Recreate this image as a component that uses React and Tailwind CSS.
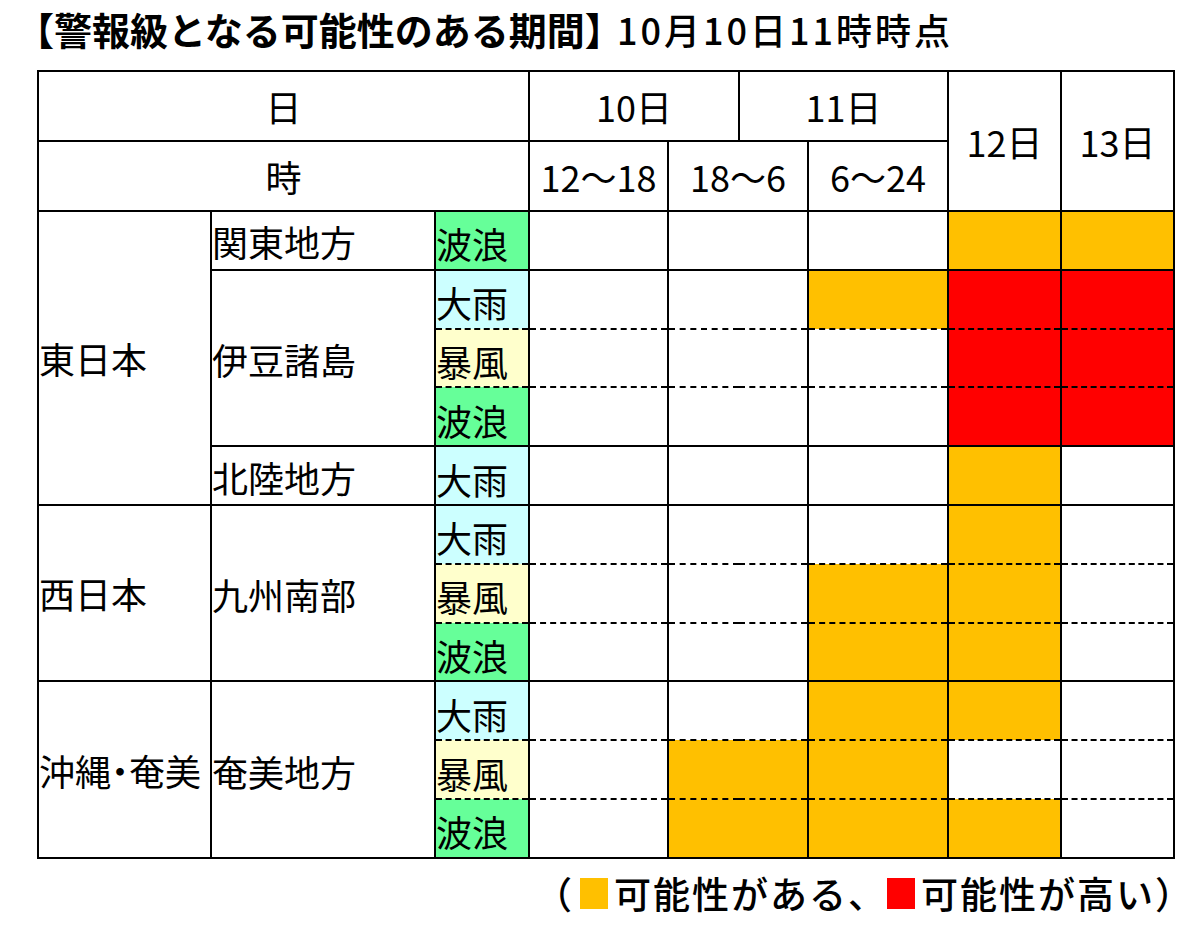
import React from 'react';

const W = 'w', O = 'o', R = 'r';

const fill = {
  w: 'bg-white',
  o: 'bg-[#ffc000]',
  r: 'bg-[#ff0000]',
};

const typeBg = {
  大雨: 'bg-[#ccffff]',
  暴風: 'bg-[#ffffcc]',
  波浪: 'bg-[#66ff99]',
};

// region -> areas -> rows of [type, cells(12-18, 18-6, 6-24, 12日, 13日)]
const data = [
  {
    region: '東日本',
    span: 5,
    areas: [
      { name: '関東地方', rows: [['波浪', [W, W, W, O, O]]] },
      {
        name: '伊豆諸島',
        rows: [
          ['大雨', [W, W, O, R, R]],
          ['暴風', [W, W, W, R, R]],
          ['波浪', [W, W, W, R, R]],
        ],
      },
      { name: '北陸地方', rows: [['大雨', [W, W, W, O, W]]] },
    ],
  },
  {
    region: '西日本',
    span: 3,
    areas: [
      {
        name: '九州南部',
        rows: [
          ['大雨', [W, W, W, O, W]],
          ['暴風', [W, W, O, O, W]],
          ['波浪', [W, W, O, O, W]],
        ],
      },
    ],
  },
  {
    region: <>沖縄<span className="[font-feature-settings:'halt']">・</span>奄美</>,
    span: 3,
    areas: [
      {
        name: '奄美地方',
        rows: [
          ['大雨', [W, W, O, O, W]],
          ['暴風', [W, O, O, W, W]],
          ['波浪', [W, O, O, O, W]],
        ],
      },
    ],
  },
];

const cell = 'border-2 border-black p-0';

const App = () => {
  const bodyRows = [];
  data.forEach((g, gi) => {
    let first = true;
    g.areas.forEach((a, ai) => {
      a.rows.forEach(([type, cells], ri) => {
        const last = ri === a.rows.length - 1;
        const top = ri > 0 ? '[border-top-style:dashed]' : '';
        const bottom = !last ? '[border-bottom-style:dashed]' : '';
        bodyRows.push(
          <tr key={`${gi}-${ai}-${ri}`} className="h-[58.8px]">
            {first && (
              <td rowSpan={g.span} className={`${cell} text-left align-middle whitespace-nowrap`}>
                {g.region}
              </td>
            )}
            {ri === 0 && (
              <td rowSpan={a.rows.length} className={`${cell} text-left align-middle pt-[2px]`}>
                {a.name}
              </td>
            )}
            <td className={`${cell} ${top} ${bottom} ${typeBg[type]} text-left align-middle pt-[6px] whitespace-nowrap`}>{type}</td>
            {cells.map((c, ci) => (
              <td
                key={ci}
                colSpan={ci === 1 ? 2 : 1}
                className={`${cell} ${top} ${bottom} ${fill[c]}`}
              ></td>
            ))}
          </tr>
        );
        first = false;
      });
    });
  });

  return (
    <div className="w-[1200px] h-[940px] bg-white text-black font-['Noto_Sans_CJK_JP',sans-serif]">
      <div className="h-[70px] pl-[16px] pt-[10px] flex items-baseline leading-none">
        <span className="text-[38px] font-bold">【警報級となる可能性のある期間】</span>
        <span className="text-[36px] font-medium tracking-[3px] -ml-[6px]">10月10日11時時点</span>
      </div>
      <table className="ml-[37px] border-collapse table-fixed w-[1136px] text-[36px] leading-none">
        <colgroup>
          <col className="w-[173px]" />
          <col className="w-[224px]" />
          <col className="w-[94px]" />
          <col className="w-[139px]" />
          <col className="w-[71px]" />
          <col className="w-[69px]" />
          <col className="w-[140px]" />
          <col className="w-[113px]" />
          <col className="w-[113px]" />
        </colgroup>
        <tbody>
          <tr className="h-[70px] text-center">
            <td colSpan={3} className={cell}>日</td>
            <td colSpan={2} className={cell}>10日</td>
            <td colSpan={2} className={cell}>11日</td>
            <td rowSpan={2} className={cell}>12日</td>
            <td rowSpan={2} className={cell}>13日</td>
          </tr>
          <tr className="h-[70px] text-center whitespace-nowrap">
            <td colSpan={3} className={cell}>時</td>
            <td className={cell}>12～18</td>
            <td colSpan={2} className={cell}>18～6</td>
            <td className={cell}>6～24</td>
          </tr>
          {bodyRows}
        </tbody>
      </table>
      <div className="mt-[16px] pr-[6px] flex justify-end items-center text-[37px] font-medium leading-none tracking-[2px]">
        <span>（</span>
        <span className="inline-block w-[28px] h-[31px] bg-[#ffc000] ml-[6px] mr-[6px]"></span>
        <span>可能性がある、</span>
        <span className="inline-block w-[28px] h-[31px] bg-[#ff0000] mr-[6px]"></span>
        <span>可能性が高い）</span>
      </div>
    </div>
  );
};

export default App;
